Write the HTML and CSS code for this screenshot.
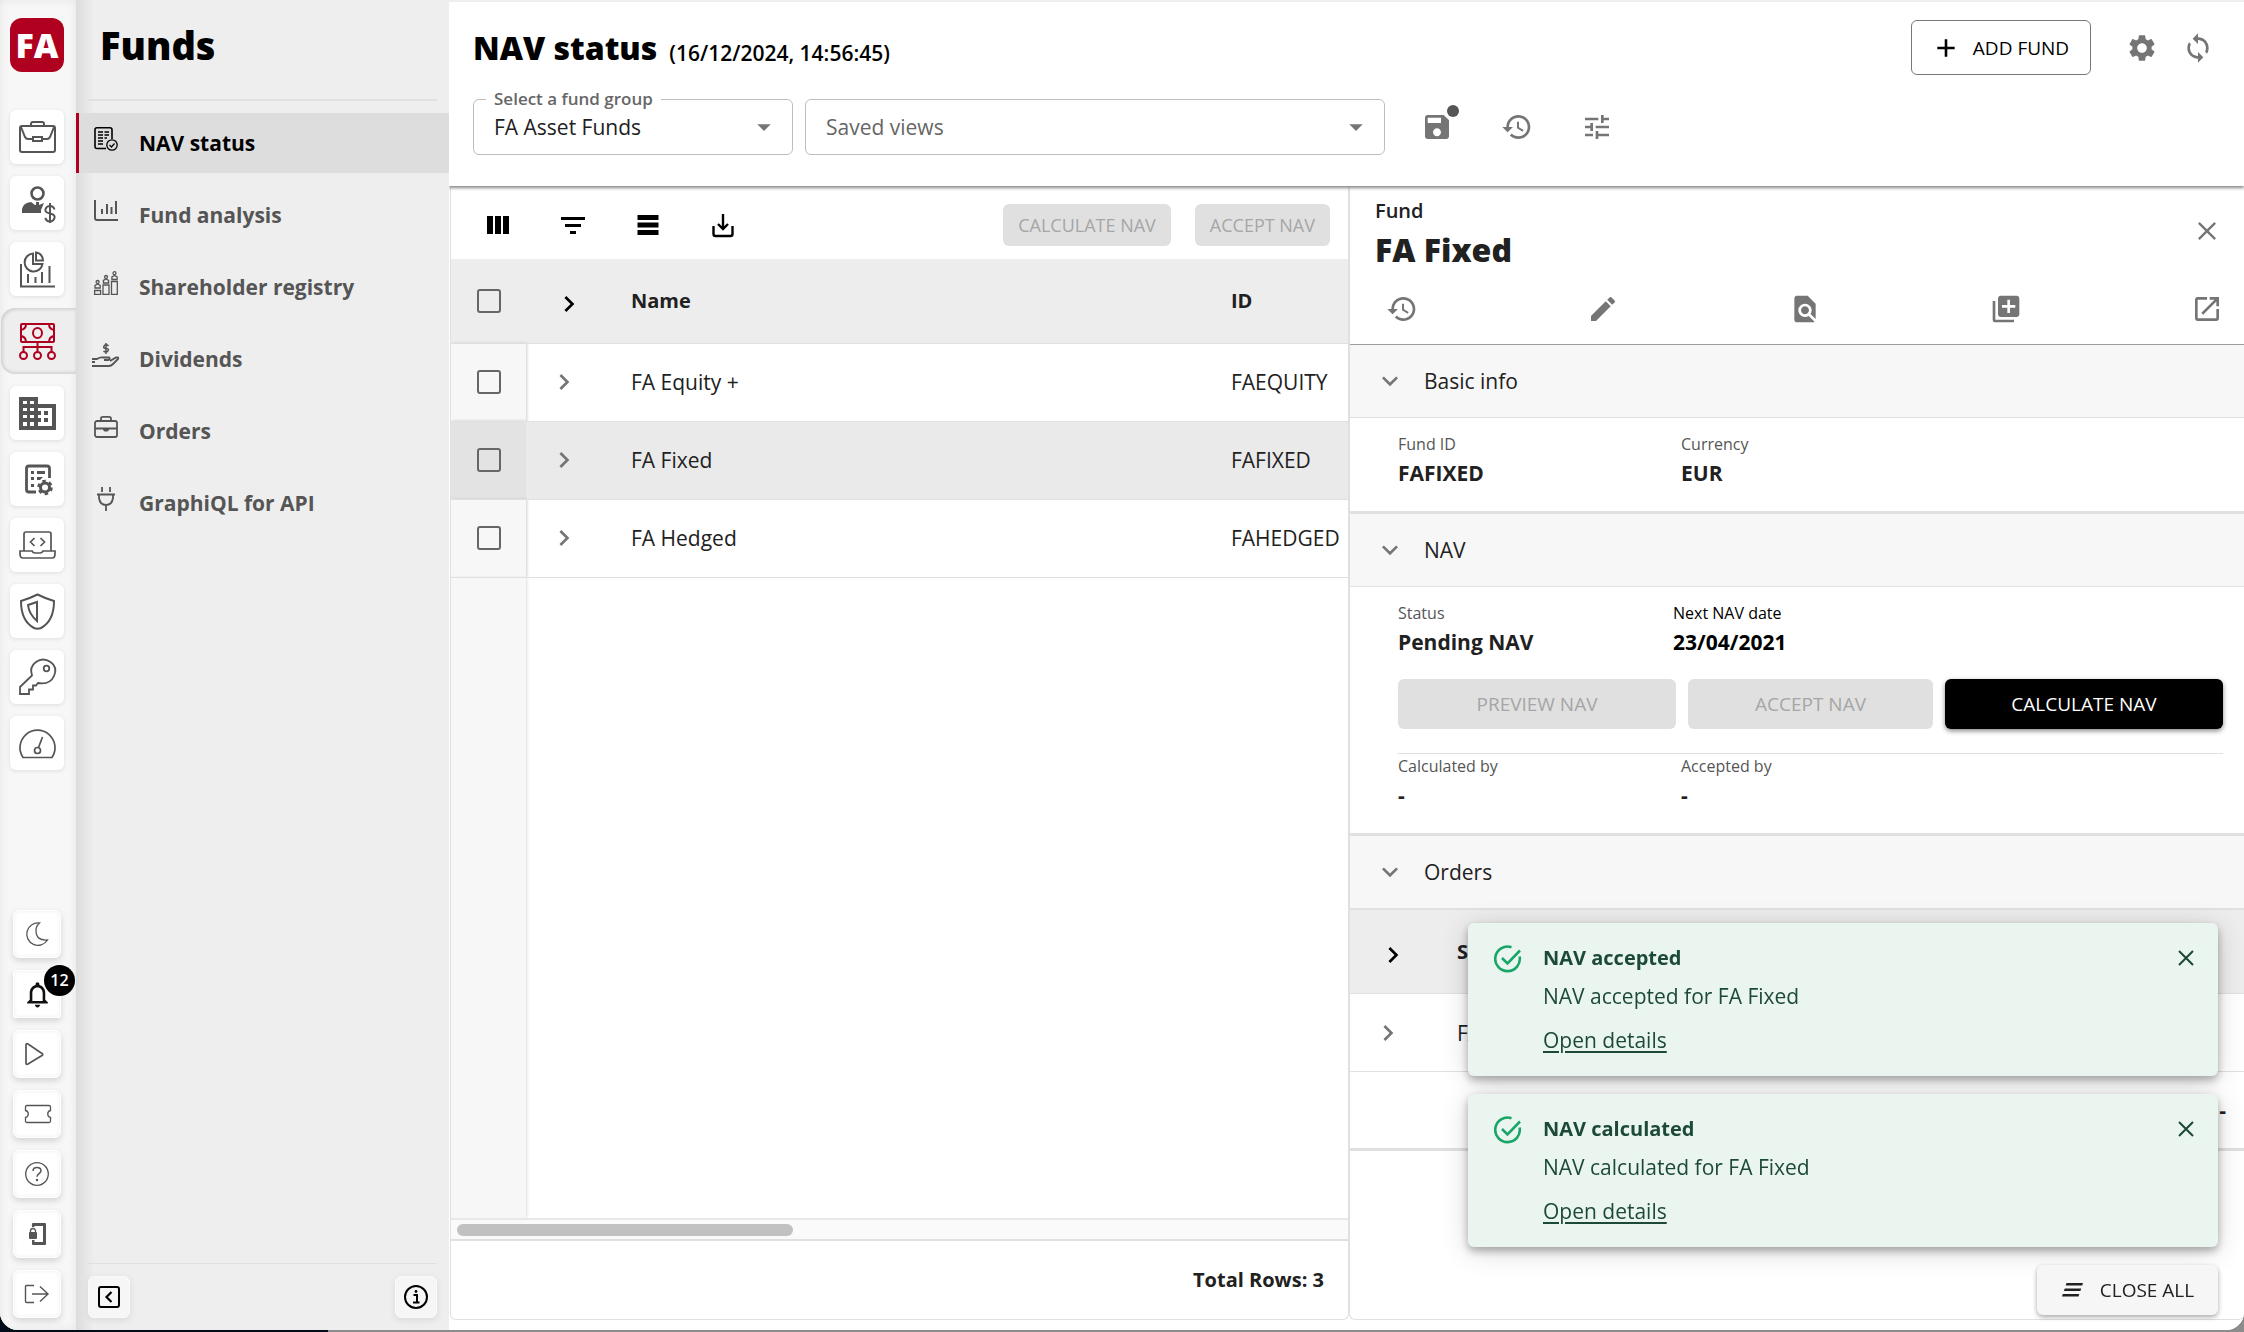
FILE: index.html
```html
<!DOCTYPE html>
<html lang="en">
<head>
<meta charset="utf-8">
<title>NAV status</title>
<link rel="stylesheet" href="styles.css">
</head>
<body>
<svg class="sprite" aria-hidden="true">
  <symbol id="history" viewBox="0 0 24 24"><path d="M13 3c-4.97 0-9 4.03-9 9H1l3.89 3.89.07.14L9 12H6c0-3.87 3.13-7 7-7s7 3.13 7 7-3.13 7-7 7c-1.93 0-3.68-.79-4.94-2.06l-1.42 1.42C8.27 19.99 10.51 21 13 21c4.97 0 9-4.03 9-9s-4.03-9-9-9zm-1 5v5l4.28 2.54.72-1.21-3.5-2.08V8H12z"/></symbol>
  <symbol id="right" viewBox="0 0 24 24"><path d="M8.59 16.59 13.17 12 8.59 7.41 10 6l6 6-6 6z"/></symbol>
  <symbol id="down" viewBox="0 0 24 24"><path d="M7.41 8.59 12 13.17l4.59-4.58L18 10l-6 6-6-6z"/></symbol>
  <symbol id="close" viewBox="0 0 24 24"><path d="M5 5l14 14M19 5L5 19" fill="none" stroke="currentColor" stroke-width="2"/></symbol>
  <symbol id="caret" viewBox="0 0 24 24"><path d="M7 10l5 5 5-5z"/></symbol>
  <symbol id="done" viewBox="0 0 28 28"><g fill="none" stroke="currentColor" stroke-width="2.6"><path d="M25.600 11.500A12.300 12.300 0 1 1 17.500 2.200"/><path d="M8 13l5.500 5.500L26 5.500"/></g></symbol>
</svg>

<div class="app">
  <nav class="rail" aria-label="Applications">
    <a class="logo" href="#" aria-label="Home">FA</a>
    <div class="rail-main">
      <button class="tile" aria-label="Portfolios"><svg viewBox="0 0 37 37"><g fill="none" stroke="currentColor" stroke-width="2"><rect x="1" y="7" width="35" height="26" rx="2"/><path d="M12 7V5q0-2 2-2h9q2 0 2 2v2M2 8l4 10q1 2 3 2h5M35 8l-4 10q-1 2-3 2h-5"/><rect x="14" y="18" width="9" height="4"/></g></svg></button>
      <button class="tile" aria-label="Customers"><svg viewBox="0 0 37 37"><circle cx="18.500" cy="8.500" r="6" fill="none" stroke="currentColor" stroke-width="2.600"/><path d="M3 28v-4q1-6 9-7l4 3h1v-3h3v3l5-2-3 7v3z"/><path d="M35.500 24.500q-1-3.500-4.500-3.500t-4.500 3.200 4.500 4.300 4.500 4.500-4.500 3.500-4.700-3.600M31 18v20" fill="none" stroke="currentColor" stroke-width="2"/></svg></button>
      <button class="tile" aria-label="Analytics"><svg viewBox="0 0 37 37"><g fill="none" stroke="currentColor" stroke-width="2"><path d="M2 13v22.500h34M9 23v9M16.500 26v6M23 21v11M30.500 15v17"/><path d="M14 2.500a9 9 0 1 0 9.500 10.500H14z"/><path d="M17 1.500v8h7q-.5-7-7-8z"/></g></svg></button>
      <button class="tile tile-active" aria-label="Funds"><svg viewBox="0 0 37 37"><g fill="none" stroke="currentColor" stroke-width="2"><rect x="2" y="1" width="33" height="18" rx="1"/><ellipse cx="18.500" cy="10" rx="4.500" ry="5"/><path d="M2 7q5-1 5-6M35 7q-5-1-5-6M2 13q5 1 5 6M35 13q-5 1-5 6M18.500 19v10M4.500 29v-5h28v5"/><circle cx="4.500" cy="32.500" r="3.500"/><circle cx="18.500" cy="32.500" r="3.500"/><circle cx="32.500" cy="32.500" r="3.500"/></g></svg></button>
      <button class="tile" aria-label="Companies"><svg viewBox="0 0 37 37"><path fill-rule="evenodd" d="M0 2h19v7h18v26H0zM4 6v3h4V6zm7 0v3h4V6zM4 13v3h4v-3zm7 0v3h4v-3zM4 20v3h4v-3zm7 0v3h4v-3zM4 27v4h4v-4zm7 0v4h4v-4zM19 13v3h3v4h-3v3h3v4h-3v4h14V13z"/><path d="M25 16h4v4h-4zM25 23h4v4h-4z"/></svg></button>
      <button class="tile" aria-label="Task setup"><svg viewBox="0 0 37 37"><path d="M17 31H10q-2.500 0-2.500-2.500V7.500Q7.500 5 10 5h18q2.500 0 2.500 2.500V17" fill="none" stroke="currentColor" stroke-width="2.800"/><path d="M12 10h3v3h-3zM18 10h8v3h-8zM12 16h3v3h-3zM18 16h6l-3 3h-3zM12 23h3v3h-3z"/><circle cx="26" cy="26.500" r="4.500" fill="none" stroke="currentColor" stroke-width="3"/><circle cx="26" cy="26.500" r="6.500" fill="none" stroke="currentColor" stroke-width="2.500" stroke-dasharray="3.400"/></svg></button>
      <button class="tile" aria-label="Developer"><svg viewBox="0 0 37 37"><g fill="none" stroke="currentColor" stroke-width="1.700"><path d="M5 24V7q0-2 2-2h23q2 0 2 2v17M1 24h12q1 2 3 2h5q2 0 3-2h12v3q0 4-3 4H4q-3 0-3-4zM15.500 11l-4 4 4 4M21.500 11l4 4-4 4"/></g></svg></button>
      <button class="tile" aria-label="Compliance"><svg viewBox="0 0 37 37"><g fill="none" stroke="currentColor" stroke-width="2"><path d="M18.500 1.500q8 4 16.500 6.500 0 20-13 27-3.500 1.500-7 0Q2 28 2 8q8.500-2.500 16.500-6.500z"/><path d="M18 9v19q-8-7-9-16z"/></g></svg></button>
      <button class="tile" aria-label="Access"><svg viewBox="0 0 37 37"><g fill="none" stroke="currentColor" stroke-width="1.800"><path d="M13 16.500Q10 8 17 3t14.500 0 3.500 14-16 7l-2 2.500h-3v4h-4V35H1v-7z"/><circle cx="27.500" cy="9.500" r="2.800"/></g></svg></button>
      <button class="tile" aria-label="Dashboard"><svg viewBox="0 0 37 37"><g fill="none" stroke="currentColor" stroke-width="1.700"><path d="M4 32.500A17.500 17.500 0 1 1 33 32.500z"/><circle cx="18.500" cy="25.500" r="3"/><path d="M19.500 22.500L23.500 12"/></g></svg></button>
    </div>
    <div class="rail-tools">
      <button class="tool" aria-label="Dark mode"><svg viewBox="0 0 24 24"><path d="M14.500 1A11.200 11.200 0 1 0 22.500 18Q11 19 11 8.500 11 4 14.500 1z" fill="none" stroke="currentColor" stroke-width="1.300"/></svg></button>
      <button class="tool tool-bell" aria-label="Notifications"><svg viewBox="0 0 24 24"><path d="M12 22c1.100 0 2-.9 2-2h-4c0 1.100.9 2 2 2zm6-6v-5c0-3.070-1.630-5.640-4.500-6.320V4c0-.83-.67-1.500-1.500-1.500s-1.500.67-1.500 1.500v.68C7.640 5.360 6 7.920 6 11v5l-2 2v1h16v-1l-2-2zm-2 1H8v-6c0-2.480 1.510-4.500 4-4.500s4 2.020 4 4.500v6z"/></svg><span class="badge">12</span></button>
      <button class="tool" aria-label="Run"><svg viewBox="0 0 24 24"><path d="M1 3v18q0 2 2 1L17 13.500q1.500-1 0-2L3 2Q1 1 1 3z" fill="none" stroke="currentColor" stroke-width="1.700"/></svg></button>
      <button class="tool" aria-label="Tickets"><svg viewBox="0 0 24 24"><path d="M2 3.500h22q1.500 0 1.500 1.500v3.500a3.600 3.600 0 0 0 0 7V19q0 1.500-1.500 1.500H2Q.5 20.500 .5 19v-3.500a3.600 3.600 0 0 0 0-7V5Q.5 3.500 2 3.500z" fill="none" stroke="currentColor" stroke-width="1.300"/></svg></button>
      <button class="tool" aria-label="Help"><svg viewBox="0 0 24 24"><circle cx="12" cy="12" r="11.300" fill="none" stroke="currentColor" stroke-width="1.300"/><path d="M8 9q0-3.500 4-3.500t4 3.300c0 3-4 2.700-4 6" fill="none" stroke="currentColor" stroke-width="1.500"/><circle cx="12" cy="18" r="1.200"/></svg></button>
      <button class="tool" aria-label="Lock session"><svg viewBox="0 0 24 24"><path d="M7 5V2q0-1 1-1h12q1 0 1 1v20q0 1-1 1H8q-1 0-1-1v-4h2.500v2H18V4H9.500v1z"/><rect x="4" y="10" width="8" height="7" rx="1"/><path d="M5.500 11V9a2.500 2.500 0 0 1 5 0V11" fill="none" stroke="currentColor" stroke-width="1.300"/></svg></button>
      <button class="tool" aria-label="Log out"><svg viewBox="0 0 24 24"><path d="M9 3.500H1.500q-1 0-1 1v15q0 1 1 1H9M7 12h16M15 4.500L23 12l-8 7.500" fill="none" stroke="currentColor" stroke-width="1.400"/></svg></button>
    </div>
  </nav>

  <aside class="side">
    <h2 class="side-title">Funds</h2>
    <nav class="menu" aria-label="Funds">
      <a class="menu-item menu-item-active" href="#"><svg viewBox="0 0 24 24"><g fill="none" stroke="currentColor" stroke-width="1.600"><path d="M12 21.500H3q-2 0-2-2v-17Q1 .8 3 .8h13q2 0 2 2V12"/><path d="M4 5h5M10.500 5H15M4 8h5M10.500 8H15M4 11h5M10.500 11H13M4 14h5M4 17h5"/><circle cx="18" cy="18" r="5.200" stroke-width="1.300"/><path d="M15.500 18l2 2 3-3.500" stroke-width="1.200"/></g></svg>NAV status</a>
      <a class="menu-item" href="#"><svg viewBox="0 0 24 24"><path d="M1 1v18q0 2 2 2h21M8 10v5M13 5v10M17.500 8v7M22 2v13" fill="none" stroke="currentColor" stroke-width="2"/></svg>Fund analysis</a>
      <a class="menu-item" href="#"><svg viewBox="0 0 24 24"><g fill="none" stroke="currentColor" stroke-width="1.300"><path d="M.6 19.500h6v3.900h-6zM9 14h6v9.400H9zM17.500 10.500h5.800v12.900h-5.800zM1 17v-2.500L3.600 13l2.600 1.500V17zM9.400 12V9.500L12 8l2.600 1.500V12zM17.900 8.500V6l2.600-1.500L23.100 6v2.500z"/><circle cx="3.600" cy="11" r="1.500"/><circle cx="12" cy="6" r="1.500"/><circle cx="20.500" cy="2.200" r="1.500"/></g></svg>Shareholder registry</a>
      <a class="menu-item" href="#"><svg viewBox="0 0 24 24"><g fill="none" stroke="currentColor" stroke-width="1.900"><path d="M-2 16h5q3-2 6-1.500h6q1.500 1.500-.5 2.500H10M16 18l6-3.500q3-.5 2 1.500l-5 5q-2 2-4 2H-2M-2 19h3"/><path d="M14.500 3Q13.500 1.800 12 1.800T9.800 3.500 12 5.400 14.300 7.300 12 9 9.600 7.800M12 0v11" stroke-width="1.500"/></g></svg>Dividends</a>
      <a class="menu-item" href="#"><svg viewBox="0 0 24 24"><g fill="none" stroke="currentColor" stroke-width="1.800"><rect x="1" y="6" width="22" height="16" rx="2"/><path d="M7 6V3.500Q7 1.800 9 1.800h6q2 0 2 1.700V6M1 13.500h22"/></g><path d="M9 13.500h6v1.500l-1.500 1.500h-3L9 15z"/></svg>Orders</a>
      <a class="menu-item" href="#"><svg viewBox="0 0 24 24"><path d="M8 0v5M16 0v5M3 7.500h18M5 7.500V11q1 7 7 7t7-7V7.500M12 18v6" fill="none" stroke="currentColor" stroke-width="1.800"/></svg>GraphiQL for API</a>
    </nav>
    <div class="side-foot">
      <button class="mini" aria-label="Collapse menu"><svg viewBox="0 0 24 24"><rect x="2" y="2" width="20" height="20" rx="2" fill="none" stroke="currentColor" stroke-width="2"/><path d="M14.500 7L9.500 12l5 5" fill="none" stroke="currentColor" stroke-width="2.200"/></svg></button>
      <button class="mini" aria-label="Information"><svg viewBox="0 0 24 24"><circle cx="12" cy="12" r="11" fill="none" stroke="currentColor" stroke-width="2"/><path d="M9.500 10h3.500v7M9 17.500h6.500" fill="none" stroke="currentColor" stroke-width="2"/><circle cx="12" cy="6.500" r="1.400"/></svg></button>
    </div>
  </aside>

  <main class="main">
    <header class="head">
      <div class="head-row">
        <h1 class="title">NAV status</h1>
        <span class="stamp">(16/12/2024, 14:56:45)</span>
        <div class="head-actions">
          <button class="add"><svg viewBox="0 0 24 24"><path d="M4 12h16M12 4v16" fill="none" stroke="currentColor" stroke-width="2.400"/></svg>ADD FUND</button>
          <button class="icon" aria-label="Settings"><svg viewBox="0 0 24 24"><path d="M19.140 12.940c.04-.3.06-.61.06-.94 0-.32-.02-.64-.07-.94l2.030-1.580c.18-.14.23-.41.12-.61l-1.920-3.320c-.12-.22-.37-.29-.59-.22l-2.390.96c-.5-.38-1.030-.7-1.620-.94l-.36-2.540c-.04-.24-.24-.41-.48-.41h-3.840c-.24 0-.43.17-.47.41l-.36 2.540c-.59.24-1.130.57-1.620.94l-2.390-.96c-.22-.08-.47 0-.59.22L2.740 8.870c-.12.21-.08.47.12.61l2.030 1.580c-.05.3-.09.63-.09.94s.02.64.07.94l-2.030 1.580c-.18.14-.23.41-.12.61l1.920 3.320c.12.22.37.29.59.22l2.390-.96c.5.38 1.030.7 1.620.94l.36 2.540c.05.24.24.41.48.41h3.840c.24 0 .44-.17.47-.41l.36-2.540c.59-.24 1.130-.56 1.620-.94l2.390.96c.22.08.47 0 .59-.22l1.920-3.320c.12-.22.07-.47-.12-.61l-2.010-1.580zM12 15.600c-1.980 0-3.600-1.620-3.600-3.600s1.620-3.600 3.600-3.600 3.600 1.620 3.600 3.600-1.620 3.600-3.600 3.600z"/></svg></button>
          <button class="icon" aria-label="Refresh"><svg viewBox="0 0 24 24"><path d="M12 4V1L8 5l4 4V6c3.310 0 6 2.690 6 6 0 1.010-.25 1.970-.7 2.800l1.460 1.460C19.540 15.030 20 13.570 20 12c0-4.420-3.580-8-8-8zm0 14c-3.310 0-6-2.690-6-6 0-1.010.25-1.970.7-2.800L5.240 7.740C4.460 8.970 4 10.430 4 12c0 4.420 3.580 8 8 8v3l4-4-4-4v3z"/></svg></button>
        </div>
      </div>
      <div class="filters">
        <div class="field">
          <label class="field-label" for="group">Select a fund group</label>
          <select class="select" id="group"><option>FA Asset Funds</option></select>
          <svg class="caret"><use href="#caret"/></svg>
        </div>
        <div class="field field-wide">
          <select class="select select-empty" aria-label="Saved views"><option>Saved views</option></select>
          <svg class="caret"><use href="#caret"/></svg>
        </div>
        <div class="view-actions">
          <button class="icon icon-dot" aria-label="Save view"><svg viewBox="0 0 24 24"><path d="M17 3H5c-1.110 0-2 .9-2 2v14c0 1.100.89 2 2 2h14c1.100 0 2-.9 2-2V7l-4-4zm-5 16c-1.660 0-3-1.340-3-3s1.340-3 3-3 3 1.340 3 3-1.340 3-3 3zm3-10H5V5h10v4z"/></svg></button>
          <button class="icon" aria-label="Reset view"><svg><use href="#history"/></svg></button>
          <button class="icon" aria-label="Adjust view"><svg viewBox="0 0 24 24"><path d="M3 17v2h6v-2H3zM3 5v2h10V5H3zm10 16v-2h8v-2h-8v-2h-2v6h2zM7 9v2H3v2h4v2h2V9H7zm14 4v-2H11v2h10zm-6-4h2V7h4V5h-4V3h-2v6z"/></svg></button>
        </div>
      </div>
    </header>

    <div class="split">
      <section class="panel">
        <div class="toolbar">
          <button class="icon icon-dark" aria-label="Columns"><svg viewBox="0 0 32 32"><path d="M5 7h6v18H5zM13 7h6v18h-6zM21 7h6v18h-6z"/></svg></button>
          <button class="icon icon-dark" aria-label="Filters"><svg viewBox="0 0 32 32"><path d="M4 8h24v3H4zM8 15h16v3H8zM13 22h6v3h-6z"/></svg></button>
          <button class="icon icon-dark" aria-label="Density"><svg viewBox="0 0 32 32"><path d="M5.500 6h21v5h-21zM5.500 13.500h21v5h-21zM5.500 21h21v5h-21z"/></svg></button>
          <button class="icon icon-dark" aria-label="Export"><svg viewBox="0 0 32 32"><path d="M6.500 17v8q0 2 2 2h15q2 0 2-2v-8M16 5v15M11 15l5 5 5-5" fill="none" stroke="currentColor" stroke-width="2.400"/></svg></button>
          <div class="toolbar-end">
            <button class="btn btn-small" disabled>CALCULATE NAV</button>
            <button class="btn btn-small" disabled>ACCEPT NAV</button>
          </div>
        </div>
        <div class="grid-body">
          <table class="table">
            <colgroup><col class="col-pin"><col class="col-open"><col class="col-name"><col></colgroup>
            <thead><tr><th class="pin"><input type="checkbox" class="tick" aria-label="Select all"></th><th><button class="expand expand-all" aria-label="Expand all"><svg><use href="#right"/></svg></button></th><th>Name</th><th>ID</th></tr></thead>
            <tbody>
              <tr><td class="pin"><input type="checkbox" class="tick" aria-label="Select FA Equity +"></td><td><button class="expand" aria-label="Expand"><svg><use href="#right"/></svg></button></td><td>FA Equity +</td><td>FAEQUITY</td></tr>
              <tr class="picked"><td class="pin"><input type="checkbox" class="tick" aria-label="Select FA Fixed"></td><td><button class="expand" aria-label="Expand"><svg><use href="#right"/></svg></button></td><td>FA Fixed</td><td>FAFIXED</td></tr>
              <tr><td class="pin"><input type="checkbox" class="tick" aria-label="Select FA Hedged"></td><td><button class="expand" aria-label="Expand"><svg><use href="#right"/></svg></button></td><td>FA Hedged</td><td>FAHEDGED</td></tr>
            </tbody>
          </table>
          <div class="pin-fill"></div>
        </div>
        <div class="scroll"><div class="thumb"></div></div>
        <div class="total">Total Rows: 3</div>
      </section>

      <section class="detail">
        <div class="detail-head">
          <div class="detail-top">
            <div>
              <p class="kind">Fund</p>
              <h2 class="detail-title">FA Fixed</h2>
            </div>
            <button class="icon icon-close" aria-label="Close panel"><svg><use href="#close"/></svg></button>
          </div>
          <div class="detail-tools">
            <button class="icon" aria-label="History"><svg><use href="#history"/></svg></button>
            <button class="icon" aria-label="Edit"><svg viewBox="0 0 24 24"><path d="M3 17.250V21h3.750L17.810 9.940l-3.750-3.750L3 17.250zM20.710 7.040c.39-.39.39-1.020 0-1.410l-2.340-2.340c-.39-.39-1.020-.39-1.410 0l-1.830 1.830 3.750 3.750 1.830-1.830z"/></svg></button>
            <button class="icon" aria-label="Preview"><svg viewBox="0 0 24 24"><path d="M20 19.590V8l-6-6H6c-1.100 0-1.990.9-1.990 2L4 20c0 1.100.89 2 1.990 2H18c.45 0 .85-.15 1.190-.4l-4.430-4.430c-.8.52-1.740.83-2.760.83-2.760 0-5-2.240-5-5s2.240-5 5-5 5 2.240 5 5c0 1.020-.31 1.960-.83 2.750L20 19.590zM9 13c0 1.660 1.340 3 3 3s3-1.340 3-3-1.340-3-3-3-3 1.340-3 3z"/></svg></button>
            <button class="icon" aria-label="Duplicate"><svg viewBox="0 0 24 24"><path d="M4 6H2v14c0 1.100.9 2 2 2h14v-2H4V6zm16-4H8c-1.100 0-2 .9-2 2v12c0 1.100.9 2 2 2h12c1.100 0 2-.9 2-2V4c0-1.100-.9-2-2-2zm-1 9h-4v4h-2v-4H9V9h4V5h2v4h4v2z"/></svg></button>
            <button class="icon" aria-label="Open in new window"><svg viewBox="0 0 24 24"><path d="M19 19H5V5h7V3H5c-1.110 0-2 .9-2 2v14c0 1.100.89 2 2 2h14c1.100 0 2-.9 2-2v-7h-2v7zM14 3v2h3.590l-9.830 9.830 1.410 1.410L19 6.410V10h2V3h-7z"/></svg></button>
          </div>
        </div>

        <button class="section"><svg><use href="#down"/></svg>Basic info</button>
        <div class="section-body">
          <dl class="facts">
            <div><dt>Fund ID</dt><dd>FAFIXED</dd></div>
            <div><dt>Currency</dt><dd>EUR</dd></div>
          </dl>
        </div>

        <button class="section"><svg><use href="#down"/></svg>NAV</button>
        <div class="section-body">
          <dl class="facts facts-thirds">
            <div><dt>Status</dt><dd>Pending NAV</dd></div>
            <div class="strong"><dt>Next NAV date</dt><dd>23/04/2021</dd></div>
          </dl>
          <div class="nav-actions">
            <button class="btn" disabled>PREVIEW NAV</button>
            <button class="btn btn-narrow" disabled>ACCEPT NAV</button>
            <button class="btn btn-primary">CALCULATE NAV</button>
          </div>
          <dl class="facts facts-tight">
            <div><dt>Calculated by</dt><dd>-</dd></div>
            <div><dt>Accepted by</dt><dd>-</dd></div>
          </dl>
        </div>

        <button class="section"><svg><use href="#down"/></svg>Orders</button>
        <table class="table orders">
          <colgroup><col class="col-order"><col><col></colgroup>
          <thead><tr><th><button class="expand expand-all" aria-label="Expand all"><svg><use href="#right"/></svg></button></th><th>Security</th><th></th></tr></thead>
          <tbody>
            <tr><td><button class="expand" aria-label="Expand"><svg><use href="#right"/></svg></button></td><td>FA Fixed</td><td></td></tr>
            <tr class="sum"><td></td><td></td><td>-</td></tr>
          </tbody>
        </table>
      </section>
    </div>
  </main>
</div>

<div class="toasts">
  <div class="toast" role="status">
    <svg class="toast-icon"><use href="#done"/></svg>
    <div class="toast-text"><strong>NAV accepted</strong><p>NAV accepted for FA Fixed</p><a href="#">Open details</a></div>
    <button class="toast-close" aria-label="Dismiss"><svg><use href="#close"/></svg></button>
  </div>
  <div class="toast" role="status">
    <svg class="toast-icon"><use href="#done"/></svg>
    <div class="toast-text"><strong>NAV calculated</strong><p>NAV calculated for FA Fixed</p><a href="#">Open details</a></div>
    <button class="toast-close" aria-label="Dismiss"><svg><use href="#close"/></svg></button>
  </div>
  <button class="close-all"><svg viewBox="0 0 24 24"><path d="M5.500 5H22l-.8 2.600H4.700zM3.700 10.500h16.500l-.8 2.600H2.900zM1.800 16h16.500l-.8 2.600H1z"/></svg>CLOSE ALL</button>
</div>
</body>
</html>
```
FILE: styles.css
```css
* { box-sizing: border-box; }

body {
  margin: 0;
  height: 100vh;
  overflow: hidden;
  background: linear-gradient(to right, #020c18 328px, #8c8c8c 328px);
  color: #212121;
  font: 21px/28px "Open Sans", "Noto Sans", sans-serif;
}

h1, h2, p, dl, dd { margin: 0; }
button, select, input { font: inherit; color: inherit; margin: 0; }
button { display: flex; align-items: center; justify-content: center; padding: 0; border: 0; background: none; }
a { color: inherit; text-decoration: none; }
svg { fill: currentColor; flex: none; display: block; }
.sprite { position: absolute; width: 0; height: 0; }

.app {
  display: flex;
  height: calc(100vh - 2px);
  overflow: hidden;
  border-radius: 0 0 18px 18px;
  background: #eee;
}

/* Application rail */
.rail {
  flex: none;
  display: flex;
  flex-direction: column;
  align-items: center;
  width: 76px;
  padding: 18px 2px 12px 0;
  background: #f7f7f7;
  box-shadow: inset 0 0 10px #e4e4e4;
  color: #555;
}
.logo {
  width: 54px;
  height: 54px;
  border-radius: 12px;
  background: #b00020;
  color: #fff;
  font-weight: 800;
  font-size: 34px;
  line-height: 54px;
  text-align: center;
}
.rail-main { display: flex; flex-direction: column; gap: 12px; padding-top: 38px; }
.tile { width: 54px; height: 54px; border-radius: 6px; background: #fff; box-shadow: 0 1px 4px #ddd; }
.tile svg { width: 37px; height: 37px; overflow: visible; }
.tile-active {
  width: 75px;
  height: 66px;
  margin: 0 -12px 0 -9px;
  padding-right: 2px;
  border-radius: 14px 0 0 14px;
  background: #eee;
  box-shadow: inset 2px 2px 3px #d4d4d4, inset 0 -2px 3px #d4d4d4;
  color: #b00020;
}
.rail-tools { display: flex; flex-direction: column; gap: 12px; margin-top: auto; }
.tool {
  position: relative;
  width: 48px;
  height: 48px;
  border: 1px solid #fff;
  border-radius: 6px;
  background: #fff;
  box-shadow: 0 3px 6px #d4d4d4, inset 0 0 4px #eee;
}
.tool svg { width: 24px; height: 24px; overflow: visible; }
.tool-bell { border-radius: 2px; color: #111; }
.tool-bell svg { width: 31px; height: 31px; }
.badge {
  position: absolute;
  top: -6px;
  right: -15px;
  width: 31px;
  height: 31px;
  border-radius: 50%;
  background: #000;
  color: #fff;
  font-size: 16px;
  font-weight: 600;
  line-height: 30px;
  text-align: center;
}

/* Section menu */
.side {
  flex: none;
  display: flex;
  flex-direction: column;
  width: 373px;
  padding: 18px 0 12px;
  background: linear-gradient(to right, #dcdcdc, #eee 18px);
}
.side-title {
  height: 83px;
  margin: 0 12px 12px;
  padding: 0 12px;
  border-bottom: 2px solid #e0e0e0;
  font-size: 38px;
  font-weight: 800;
  line-height: 54px;
  color: #000;
}
.menu { display: flex; flex-direction: column; gap: 12px; }
.menu-item {
  display: flex;
  align-items: center;
  gap: 21px;
  height: 60px;
  padding-left: 15px;
  border-left: 3px solid transparent;
  color: #555;
  font-weight: 700;
}
.menu-item svg { width: 24px; height: 24px; margin-bottom: 8px; overflow: visible; }
.menu-item-active { border-left-color: #b00020; background: #ddd; color: #000; }
.side-foot {
  display: flex;
  justify-content: space-between;
  margin: auto 12px 0;
  padding-top: 12px;
  border-top: 1px solid #e0e0e0;
}
.mini {
  width: 42px;
  height: 42px;
  border-radius: 6px;
  border: 1px solid #fafafa;
  background: #f6f6f6;
  box-shadow: 0 2px 6px #d8d8d8;
  color: #000;
}
.mini svg { width: 24px; height: 24px; }

/* Page header */
.main { flex: 1; min-width: 0; display: flex; flex-direction: column; padding-top: 2px; background: #eee; }
.head {
  position: relative;
  flex: none;
  height: 184px;
  padding: 18px 30px 0 24px;
  background: #fff;
  box-shadow: 0 2px 3px #888;
  clip-path: inset(0 0 -8px 0);
}
.head-row { display: flex; align-items: center; height: 55px; }
.title { font-size: 32px; font-weight: 800; color: #000; }
.stamp { margin: 10px 0 0 12px; font-weight: 600; color: #000; }
.head-actions { display: flex; align-items: center; margin-left: auto; }
.head-actions .icon { margin-left: 24px; }
.add {
  gap: 14px;
  width: 180px;
  height: 55px;
  margin-right: 11px;
  border: 1px solid #777;
  border-radius: 6px;
  color: #000;
  font-size: 19px;
}
.add svg { width: 26px; height: 26px; }
.icon { position: relative; width: 32px; height: 32px; color: #757575; }
.icon svg { width: 32px; height: 32px; }
.icon-dark { color: #000; }
.icon-dot::after {
  content: "";
  position: absolute;
  top: -6px;
  right: -6px;
  width: 12px;
  height: 12px;
  border-radius: 50%;
  background: #555;
}
.filters { display: flex; align-items: center; gap: 12px; margin-top: 24px; }
.field { position: relative; flex: 0 1 320px; }
.field-wide { flex-basis: 580px; }
.field-label {
  position: absolute;
  top: -12px;
  left: 13px;
  padding: 0 8px;
  background: #fff;
  color: #666;
  font-size: 17px;
  font-weight: 600;
  line-height: 24px;
}
.select {
  appearance: none;
  display: block;
  width: 100%;
  height: 56px;
  padding: 0 48px 0 20px;
  border: 1px solid #bdbdbd;
  border-radius: 6px;
  background: #fff;
}
.select-empty { color: #666; }
.caret { position: absolute; top: 12px; right: 13px; width: 32px; height: 32px; color: #757575; pointer-events: none; }
.view-actions { display: flex; gap: 48px; margin-left: 24px; }

/* Fund table */
.split {
  flex: 1;
  min-height: 0;
  display: grid;
  grid-template-columns: 899fr 895fr;
  padding: 0 0 10px 1px;
  background: #fff;
}
.panel {
  min-width: 0;
  display: flex;
  flex-direction: column;
  border: 1px solid #e0e0e0;
  border-top: 0;
  border-radius: 0 0 6px 6px;
}
.toolbar { flex: none; display: flex; align-items: center; gap: 43px; height: 73px; padding: 4px 18px 0 31px; }
.toolbar-end { display: flex; gap: 24px; margin-left: auto; }
.btn { height: 50px; border-radius: 6px; background: #e0e0e0; color: #a6a6a6; font-size: 19px; flex: 278 1 0; }
.btn-narrow { flex-grow: 245; }
.btn-small { flex: none; height: 42px; padding: 0 15px; font-size: 18px; }
.btn-primary { background: #000; color: #fff; box-shadow: 0 2px 5px #888; }

.grid-body { flex: 1; min-height: 0; overflow: hidden; display: flex; flex-direction: column; }
.table { width: 100%; border-collapse: collapse; table-layout: fixed; white-space: nowrap; }
.table th, .table td { height: 78px; padding: 0; border-bottom: 1px solid #e0e0e0; text-align: left; font-weight: 400; }
.table th { height: 84px; background: #ededed; font-weight: 700; font-size: 20px; }
.col-pin { width: 75px; }
.col-open { width: 105px; }
.col-name { width: 600px; }
.table .pin { background: #f7f7f7; box-shadow: 1px 0 3px #ccc; }
.table th.pin { background: #ededed; }
.table .picked td { background: #eaeaea; }
.table .picked td.pin { background: #e3e3e3; }
.tick {
  appearance: none;
  display: block;
  width: 24px;
  height: 24px;
  margin-left: 26px;
  border: 2px solid #666;
  border-radius: 3px;
}
.expand { width: 32px; height: 32px; margin-left: 22px; color: #757575; }
.expand svg { width: 32px; height: 32px; }
.expand-all { margin: 6px 0 0 27px; color: #000; }
.pin-fill { flex: 1; width: 75px; background: #f7f7f7; box-shadow: 1px 0 3px #ddd; }
.scroll {
  flex: none;
  height: 23px;
  padding: 4px 6px;
  border-top: 2px solid #e8e8e8;
  border-bottom: 2px solid #e0e0e0;
  background: #fafafa;
}
.thumb { width: 38%; height: 12px; border-radius: 6px; background: #c1c1c1; }
.total { flex: none; height: 78px; padding-right: 24px; font-weight: 700; font-size: 20px; line-height: 78px; text-align: right; }

/* Fund details */
.detail { min-width: 0; border: 1px solid #e0e0e0; border-width: 0 0 1px 1px; border-radius: 0 0 6px 6px; }
.detail-head { height: 159px; padding: 11px 21px 0 25px; border-bottom: 1px solid #9e9e9e; }
.detail-top { display: flex; justify-content: space-between; align-items: flex-start; }
.kind { font-size: 20px; font-weight: 600; }
.detail-title { font-size: 32px; font-weight: 800; line-height: 50px; }
.icon-close { margin-top: 18px; }
.icon-close svg { width: 28px; height: 28px; }
.detail-tools { display: flex; justify-content: space-between; padding-left: 11px; margin-top: 18px; }
.section {
  justify-content: flex-start;
  gap: 18px;
  width: 100%;
  height: 73px;
  padding-left: 24px;
  border-bottom: 1px solid #e0e0e0;
  background: #f7f7f7;
}
.section svg { width: 32px; height: 32px; color: #757575; }
.section-body { padding: 14px 21px 21px 48px; border-bottom: 3px solid #e0e0e0; }
.facts { display: grid; grid-template-columns: minmax(0, 283px) 1fr; }
.facts-thirds { grid-template-columns: repeat(3, 1fr); }
.facts dt { color: #555; font-size: 16px; line-height: 24px; }
.facts dd { font-weight: 700; line-height: 34px; }
.facts .strong dt, .facts .strong dd { color: #000; }
.facts-tight { border-top: 1px solid #e0e0e0; }
.nav-actions { display: flex; gap: 12px; margin: 20px 0 24px; }
.col-order { width: 107px; }
.orders { border-top: 1px solid #e0e0e0; border-bottom: 3px solid #e0e0e0; }
.orders .sum td { font-weight: 700; }
.orders .sum td:last-child { padding-right: 18px; text-align: right; }

/* Notifications */
.toasts {
  position: fixed;
  right: 26px;
  bottom: 17px;
  display: flex;
  flex-direction: column;
  align-items: flex-end;
  gap: 18px;
}
.toast {
  display: flex;
  align-items: flex-start;
  width: 750px;
  padding: 21px 24px 22px 26px;
  border-radius: 6px;
  background: #eaf5f0;
  box-shadow: 0 4px 8px rgba(0, 0, 0, .3), 0 4px 28px rgba(0, 0, 0, .16);
  color: #1c4a36;
}
.toast-icon { width: 28px; height: 28px; margin-top: 1px; color: #1aa568; }
.toast-text { flex: 1; margin-left: 21px; }
.toast-text strong { display: block; font-size: 20px; }
.toast-text p { margin: 10px 0 16px; }
.toast-text a { display: block; width: fit-content; text-decoration: underline; text-decoration-thickness: 2px; text-underline-offset: 3px; }
.toast-close { margin: 2px -4px 0 0; }
.toast-close svg { width: 24px; height: 24px; }
.close-all {
  gap: 15px;
  width: 181px;
  height: 50px;
  border-radius: 6px;
  background: #f6f6f6;
  box-shadow: 0 2px 5px rgba(0, 0, 0, .35);
  font-size: 19px;
}
.close-all svg { width: 24px; height: 24px; }
```
